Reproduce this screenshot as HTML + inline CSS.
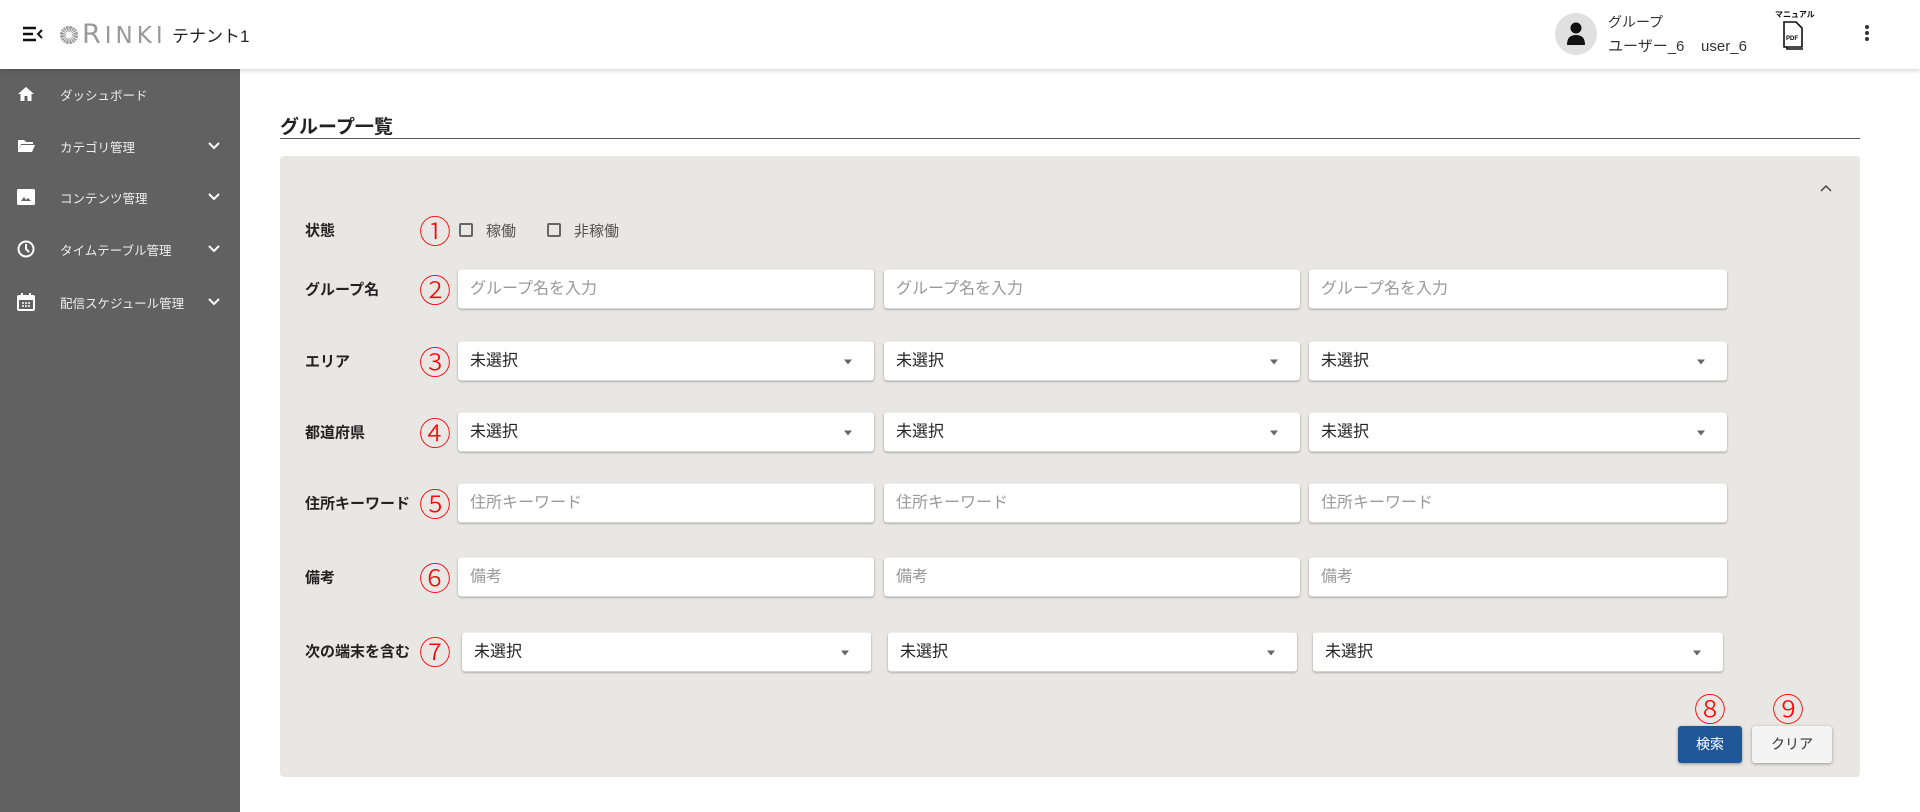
<!DOCTYPE html>
<html><head><meta charset="utf-8"><style>
*{box-sizing:border-box;margin:0;padding:0}
body{width:1920px;height:812px;overflow:hidden;background:#fff;font-family:"Liberation Sans","Noto Sans CJK JP",sans-serif;position:relative;color:#222}
.hdr{position:absolute;left:0;top:0;width:1920px;height:69px;background:#fff;box-shadow:0 2px 4px rgba(0,0,0,.15);z-index:2}
.side{position:absolute;left:0;top:69px;width:240px;height:743px;background:#616161;color:#eee}
.si{position:absolute;left:0;width:240px;height:40px;font-size:12.5px;display:flex;align-items:center}
.si svg.ic{position:absolute;left:17px}
.si span{position:absolute;left:60px}
.si .chev{position:absolute;left:208px}
.abs{position:absolute}
.title{position:absolute;left:280px;top:112px;font-size:19px;font-weight:bold;color:#222}
.line{position:absolute;left:280px;top:138px;width:1580px;height:1px;background:#555}
.panel{position:absolute;left:280px;top:156px;width:1580px;height:621px;background:#e9e7e3;border-radius:4px}
.lbl{position:absolute;left:305px;font-size:15px;font-weight:bold;color:#222;transform:translateY(-50%)}
.num{position:absolute;left:418px;width:34px;height:34px;color:#f00;font-size:32px;line-height:34px;text-align:center;transform:translateY(-50%);font-family:"Noto Sans CJK JP",sans-serif;font-weight:300}
.inp{position:absolute;height:39px;background:#fff;border-radius:3px;box-shadow:0 1px 2px rgba(0,0,0,.35);transform:translateY(-50%);font-size:16px;padding-left:12px;line-height:39px}
.ph{color:#999}
.sel{color:#222}
.sel:after{content:"";position:absolute;right:22px;top:18px;border:4px solid transparent;border-top:5px solid #666;border-bottom:0}
.cb{position:absolute;width:14px;height:14px;border:2px solid #666;border-radius:2px}
</style></head><body>
<div class="hdr">
<svg class="abs" style="left:22px;top:25px" width="22" height="18" viewBox="0 0 22 18"><path d="M1 3h13M1 9h10M1 15h13" stroke="#111" stroke-width="2.5"/><path d="M20 5l-4 4 4 4" stroke="#111" stroke-width="2" fill="none"/></svg>
<svg class="abs" style="left:57px;top:22px" width="24" height="24" viewBox="0 0 24 24"><g fill="#999"><circle cx="12" cy="13" r="9"/></g><circle cx="12" cy="13" r="3" fill="#fff"/><g stroke="#fff" stroke-width="0.8"><path d="M12 4v18M3 13h18M5.6 6.6l12.8 12.8M18.4 6.6L5.6 19.4M8 4.5l8 17M16 4.5l-8 17M3.5 9l17 8M20.5 9l-17 8"/></g></svg>
<div class="abs" style="left:82px;top:19px;font-size:27px;color:#999;letter-spacing:4px;font-family:'DejaVu Sans',sans-serif">R<span style="font-size:23px">INKI</span></div>
<div class="abs" style="left:172px;top:22px;font-size:17px;color:#222">テナント1</div>
<div class="abs" style="left:1555px;top:13px;width:42px;height:42px;border-radius:50%;background:#e0e0e0"></div>
<svg class="abs" style="left:1566px;top:22px" width="20" height="24" viewBox="0 0 20 24"><circle cx="10" cy="6" r="5.5" fill="#111"/><path d="M1 23c0-7 3-10 9-10s9 3 9 10z" fill="#111"/></svg>
<div class="abs" style="left:1608px;top:12px;font-size:14px;color:#333">グループ</div>
<div class="abs" style="left:1608px;top:35px;font-size:15px;color:#333">ユーザー_6&nbsp;&nbsp;&nbsp;&nbsp;user_6</div>
<div class="abs" style="left:1775px;top:9px;font-size:8px;font-weight:bold;color:#111">マニュアル</div>
<svg class="abs" style="left:1780px;top:20px" width="30" height="32" viewBox="0 0 30 32"><path d="M7 5v24h16" fill="none" stroke="#111" stroke-width="1.6"/><path d="M4 2h12l6 6v19H4z" fill="#fff" stroke="#111" stroke-width="1.6"/><text x="6" y="20" font-size="6" font-weight="bold" font-family="Liberation Sans">PDF</text></svg>
<svg class="abs" style="left:1864px;top:24px" width="6" height="18"><circle cx="3" cy="3" r="2" fill="#333"/><circle cx="3" cy="9" r="2" fill="#333"/><circle cx="3" cy="15" r="2" fill="#333"/></svg>
</div>
<div class="side">
<div class="si" style="top:5px"><svg class="ic" width="18" height="16" viewBox="0 0 18 16"><path d="M9 1L1 8h2.5v7h4v-5h3v5h4V8H17z" fill="#fff"/></svg><span>ダッシュボード</span></div>
<div class="si" style="top:57px"><svg class="ic" width="18" height="14" viewBox="0 0 18 14"><path d="M1 1h6l2 2h7v2H4L1 13z M4 6h14l-3 7H1z" fill="#fff"/></svg><span>カテゴリ管理</span><svg class="chev" width="12" height="8"><path d="M1 1l5 5 5-5" stroke="#fff" stroke-width="2" fill="none"/></svg></div>
<div class="si" style="top:108px"><svg class="ic" width="18" height="16" viewBox="0 0 18 16"><rect x="0" y="0" width="18" height="16" rx="1.5" fill="#fff"/><path d="M4 12l3-4 2 3 2-2 3 3z" fill="#616161"/></svg><span>コンテンツ管理</span><svg class="chev" width="12" height="8"><path d="M1 1l5 5 5-5" stroke="#fff" stroke-width="2" fill="none"/></svg></div>
<div class="si" style="top:160px"><svg class="ic" width="18" height="18" viewBox="0 0 18 18"><circle cx="9" cy="9" r="7.5" stroke="#fff" stroke-width="2" fill="none"/><path d="M9 4v5l3 3" stroke="#fff" stroke-width="2" fill="none"/></svg><span>タイムテーブル管理</span><svg class="chev" width="12" height="8"><path d="M1 1l5 5 5-5" stroke="#fff" stroke-width="2" fill="none"/></svg></div>
<div class="si" style="top:213px"><svg class="ic" width="18" height="18" viewBox="0 0 18 18"><rect x="1" y="3" width="16" height="14" rx="1" fill="none" stroke="#fff" stroke-width="2"/><rect x="1" y="3" width="16" height="4" fill="#fff"/><path d="M5 0v4M13 0v4" stroke="#fff" stroke-width="2"/><path d="M5 10h2M8 10h2M11 10h2M5 13h2M8 13h2M11 13h2" stroke="#fff" stroke-width="1.5"/></svg><span>配信スケジュール管理</span><svg class="chev" width="12" height="8"><path d="M1 1l5 5 5-5" stroke="#fff" stroke-width="2" fill="none"/></svg></div>
</div>
<div class="title">グループ一覧</div>
<div class="line"></div>
<div class="panel"></div>
<svg class="abs" style="left:1820px;top:184px" width="12" height="8"><path d="M1 7l5-5 5 5" stroke="#444" stroke-width="1.5" fill="none"/></svg>

<div class="lbl" style="top:230px">状態</div><div class="num" style="top:230px">①</div>
<div class="cb" style="left:459px;top:223px"></div><div class="abs" style="left:486px;top:220px;font-size:15px;color:#555">稼働</div>
<div class="cb" style="left:547px;top:223px"></div><div class="abs" style="left:574px;top:220px;font-size:15px;color:#555">非稼働</div>

<div class="lbl" style="top:289px">グループ名</div><div class="num" style="top:289px">②</div>
<div class="inp ph" style="left:458px;top:289px;width:416px">グループ名を入力</div>
<div class="inp ph" style="left:884px;top:289px;width:416px">グループ名を入力</div>
<div class="inp ph" style="left:1309px;top:289px;width:418px">グループ名を入力</div>

<div class="lbl" style="top:361px">エリア</div><div class="num" style="top:361px">③</div>
<div class="inp sel" style="left:458px;top:361px;width:416px">未選択</div>
<div class="inp sel" style="left:884px;top:361px;width:416px">未選択</div>
<div class="inp sel" style="left:1309px;top:361px;width:418px">未選択</div>

<div class="lbl" style="top:432px">都道府県</div><div class="num" style="top:432px">④</div>
<div class="inp sel" style="left:458px;top:432px;width:416px">未選択</div>
<div class="inp sel" style="left:884px;top:432px;width:416px">未選択</div>
<div class="inp sel" style="left:1309px;top:432px;width:418px">未選択</div>

<div class="lbl" style="top:503px">住所キーワード</div><div class="num" style="top:503px">⑤</div>
<div class="inp ph" style="left:458px;top:503px;width:416px">住所キーワード</div>
<div class="inp ph" style="left:884px;top:503px;width:416px">住所キーワード</div>
<div class="inp ph" style="left:1309px;top:503px;width:418px">住所キーワード</div>

<div class="lbl" style="top:577px">備考</div><div class="num" style="top:577px">⑥</div>
<div class="inp ph" style="left:458px;top:577px;width:416px">備考</div>
<div class="inp ph" style="left:884px;top:577px;width:416px">備考</div>
<div class="inp ph" style="left:1309px;top:577px;width:418px">備考</div>

<div class="lbl" style="top:651px">次の端末を含む</div><div class="num" style="top:651px">⑦</div>
<div class="inp sel" style="left:462px;top:652px;width:409px">未選択</div>
<div class="inp sel" style="left:888px;top:652px;width:409px">未選択</div>
<div class="inp sel" style="left:1313px;top:652px;width:410px">未選択</div>

<div class="num" style="left:1693px;top:708px">⑧</div>
<div class="num" style="left:1771px;top:708px">⑨</div>
<div class="abs" style="left:1678px;top:726px;width:64px;height:37px;background:#1f5798;border-radius:3px;color:#fff;font-size:14px;text-align:center;line-height:37px;box-shadow:0 1px 3px rgba(0,0,0,.35)">検索</div>
<div class="abs" style="left:1752px;top:726px;width:80px;height:37px;background:#f4f4f4;border-radius:3px;color:#333;font-size:14px;text-align:center;line-height:37px;box-shadow:0 1px 3px rgba(0,0,0,.35)">クリア</div>
</body></html>
